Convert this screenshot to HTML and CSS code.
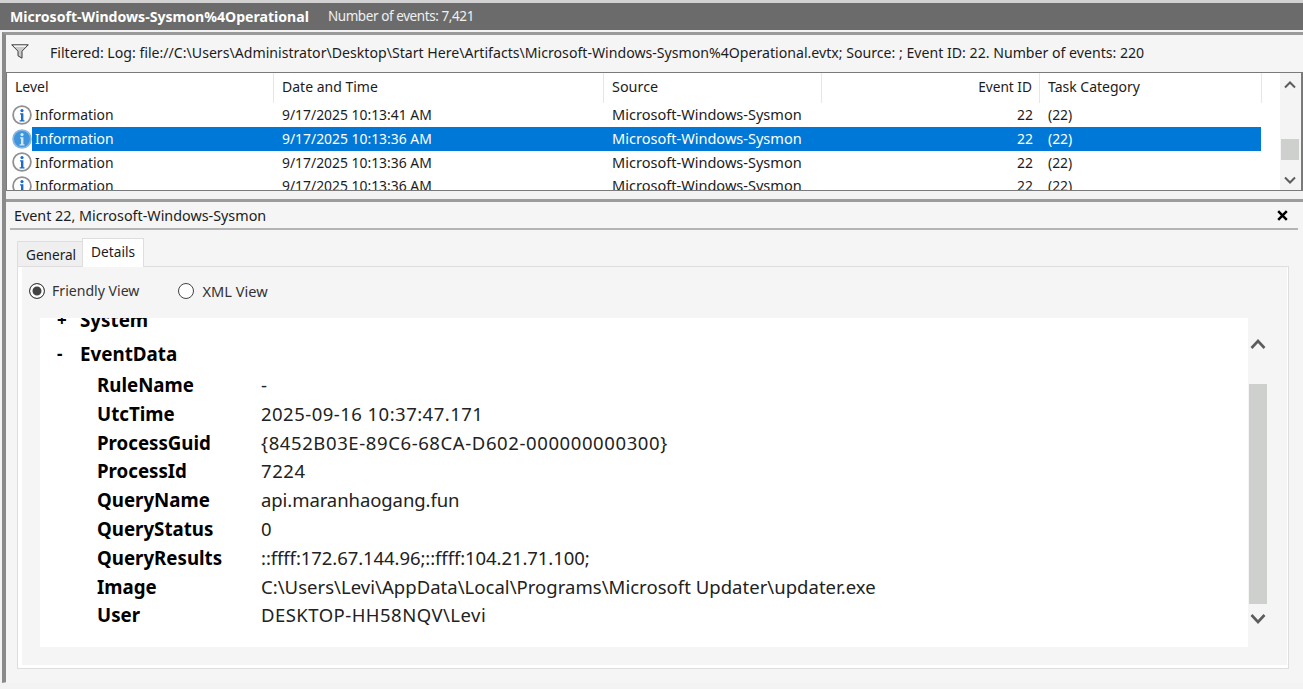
FILE: index.html
```html
<!DOCTYPE html>
<html lang="en">
<head>
<meta charset="utf-8">
<title>Event Viewer</title>
<link rel="stylesheet" href="styles.css">
</head>
<body>
<svg class="defs" width="0" height="0" aria-hidden="true">
  <symbol id="info" viewBox="0 0 20 20">
    <circle cx="10" cy="10" r="8.9" fill="#fff" stroke="#919191" stroke-width="1.8"/>
    <circle cx="10" cy="5.6" r="1.6" fill="#1b6cc8"/>
    <path d="M8 8.3h3.4v6.9h1.1v1.3H7.6v-1.3h1.4V9.6H8z" fill="#1b6cc8"/>
  </symbol>
  <symbol id="info-selected" viewBox="0 0 20 20">
    <circle cx="10" cy="10" r="8.9" fill="#3f94de" stroke="#86b6e0" stroke-width="1.8"/>
    <circle cx="10" cy="5.6" r="1.6" fill="#d5e8f8"/>
    <path d="M8 8.3h3.4v6.9h1.1v1.3H7.6v-1.3h1.4V9.6H8z" fill="#d5e8f8"/>
  </symbol>
</svg>
<div class="app">
  <header class="titlebar">
    <span class="log-name">Microsoft-Windows-Sysmon%4Operational</span>
    <span class="log-count">Number of events: 7,421</span>
  </header>
  <main class="body">
    <div class="filter">
      <svg class="funnel" width="18" height="15" viewBox="0 0 18 15">
        <path d="M.7.8h16.6l-6.3 6.4v7l-4-2.4V7.2z" fill="#c9c9c9" stroke="#3c3c3c" stroke-width="1"/>
        <path d="M3 2.2h12" stroke="#fff" stroke-width="1.2"/>
      </svg>
      <span>Filtered: Log: file://C:\Users\Administrator\Desktop\Start Here\Artifacts\Microsoft-Windows-Sysmon%4Operational.evtx; Source: ; Event ID: 22. Number of events: 220</span>
    </div>
    <section class="list">
      <div class="list-main">
        <div class="row head">
          <div class="c level">Level</div>
          <div class="c date">Date and Time</div>
          <div class="c source">Source</div>
          <div class="c id">Event ID</div>
          <div class="c task">Task Category</div>
        </div>
        <div class="row">
          <div class="c level"><svg class="info"><use href="#info"/></svg><span>Information</span></div>
          <div class="c date">9/17/2025 10:13:41 AM</div>
          <div class="c source">Microsoft-Windows-Sysmon</div>
          <div class="c id">22</div>
          <div class="c task">(22)</div>
        </div>
        <div class="row selected">
          <div class="c level"><svg class="info"><use href="#info-selected"/></svg><span>Information</span></div>
          <div class="c date">9/17/2025 10:13:36 AM</div>
          <div class="c source">Microsoft-Windows-Sysmon</div>
          <div class="c id">22</div>
          <div class="c task">(22)</div>
        </div>
        <div class="row">
          <div class="c level"><svg class="info"><use href="#info"/></svg><span>Information</span></div>
          <div class="c date">9/17/2025 10:13:36 AM</div>
          <div class="c source">Microsoft-Windows-Sysmon</div>
          <div class="c id">22</div>
          <div class="c task">(22)</div>
        </div>
        <div class="row">
          <div class="c level"><svg class="info"><use href="#info"/></svg><span>Information</span></div>
          <div class="c date">9/17/2025 10:13:36 AM</div>
          <div class="c source">Microsoft-Windows-Sysmon</div>
          <div class="c id">22</div>
          <div class="c task">(22)</div>
        </div>
      </div>
      <div class="list-scroll">
        <svg class="arrow" width="12" height="8" viewBox="0 0 12 8"><path d="M1 6.5l5-5 5 5" fill="none" stroke="#5c5c5c" stroke-width="2"/></svg>
        <div class="thumb"></div>
        <svg class="arrow" width="12" height="8" viewBox="0 0 12 8"><path d="M1 1.5l5 5 5-5" fill="none" stroke="#5c5c5c" stroke-width="2"/></svg>
      </div>
    </section>
    <section class="event">
      <div class="event-head">
        <span>Event 22, Microsoft-Windows-Sysmon</span>
        <svg width="11" height="11" viewBox="0 0 11 11"><path d="M1.2 1.2l8.6 8.6M9.8 1.2l-8.6 8.6" stroke="#000" stroke-width="2.5"/></svg>
      </div>
      <div class="tabs">
        <div class="tab">General</div>
        <div class="tab active">Details</div>
      </div>
      <div class="tab-panel">
        <div class="radios">
          <label class="radio"><span class="dot on"></span><span>Friendly View</span></label>
          <label class="radio xml"><span class="dot"></span><span>XML View</span></label>
        </div>
        <div class="viewer">
          <div class="doc">
            <div class="doc-inner">
              <div class="group"><span class="sign">+</span>System</div>
              <div class="group second"><span class="sign">-</span>EventData</div>
              <dl class="fields">
                <dt>RuleName</dt><dd>-</dd>
                <dt>UtcTime</dt><dd class="wide">2025-09-16 10:37:47.171</dd>
                <dt>ProcessGuid</dt><dd class="wider">{8452B03E-89C6-68CA-D602-000000000300}</dd>
                <dt>ProcessId</dt><dd class="wider">7224</dd>
                <dt>QueryName</dt><dd class="tight">api.maranhaogang.fun</dd>
                <dt>QueryStatus</dt><dd>0</dd>
                <dt>QueryResults</dt><dd class="tight">::ffff:172.67.144.96;::ffff:104.21.71.100;</dd>
                <dt>Image</dt><dd class="open">C:\Users\Levi\AppData\Local\Programs\Microsoft Updater\updater.exe</dd>
                <dt>User</dt><dd class="wide">DESKTOP-HH58NQV\Levi</dd>
              </dl>
            </div>
          </div>
          <div class="doc-scroll">
            <svg class="arrow" width="16" height="12" viewBox="0 0 16 12"><path d="M1.5 10l6.5-7 6.5 7" fill="none" stroke="#5c5c5c" stroke-width="2.6"/></svg>
            <div class="doc-thumb"></div>
            <svg class="arrow" width="16" height="12" viewBox="0 0 16 12"><path d="M1.5 2l6.5 7 6.5-7" fill="none" stroke="#5c5c5c" stroke-width="2.6"/></svg>
          </div>
        </div>
      </div>
    </section>
  </main>
</div>
</body>
</html>
```

FILE: styles.css
```css
* { box-sizing: border-box; }
html, body { margin: 0; height: 100%; overflow: hidden; }
.defs { position: absolute; }
body {
  background: #f3f3f3;
  color: #1c1c1c;
  font-family: "Noto Sans", "Liberation Sans", sans-serif;
  font-size: 14px;
}
.app { width: 1303px; height: 689px; background: #f3f3f3; border-top: 3px solid #d2d2d2; }
.titlebar {
  height: 27px;
  background: #6b6b6b;
  color: #fff;
  display: flex;
  align-items: center;
  padding-left: 10px;
  gap: 19px;
  line-height: 27px;
}
.log-name { font-weight: 700; font-size: 14.1px; }
.log-count { color: #f0f0f0; font-size: 13.5px; letter-spacing: -.42px; }
.body {
  height: 651px;
  margin: 2px 0 0 2px;
  border-left: 4px solid #8a8a8a;
  border-top: 3px solid #9a9a9a;
  border-bottom: 1px solid #dcdcdc;
}
.filter {
  height: 37px;
  padding: 0 0 1px 5px;
  display: flex;
  align-items: center;
  gap: 21px;
  background: #f5f5f5;
  line-height: 20px;
}
.filter span { font-size: 14.14px; white-space: nowrap; }
.funnel { flex: none; margin-top: -4px; }
.list {
  height: 119px;
  display: flex;
  background: #fff;
  border: 1px solid #7a7a7a;
  border-right-width: 2px;
  overflow: hidden;
}
.list-main { flex: 1; min-width: 0; overflow: hidden; }
.row {
  display: flex;
  height: 23.8px;
  line-height: 24px;
  font-size: 13.9px;
  white-space: nowrap;
  width: 1254px;
}
.row.head { height: 30px; line-height: 28px; width: 1274px; font-size: 14px; }
.c { flex: none; padding-left: 8px; overflow: hidden; }
.head .c { border-right: 1px solid #e6e6e6; }
.level { width: 267px; display: flex; align-items: center; }
.head .level { display: block; }
.date { width: 330px; }
.source { width: 218px; font-size: 14.55px; line-height: 23px; }
.head .source { font-size: 14.4px; line-height: 27px; }
.id { width: 218px; text-align: right; padding-right: 7px; padding-left: 0; }
.head .id { font-size: 13.7px; }
.task { flex: 1; }
.head .task { flex: none; width: 222px; }
.info { width: 20px; height: 20px; margin: 0 3px 0 -3px; flex: none; }
.selected {
  background: linear-gradient(to right, transparent 25px, #0078d7 25px);
  color: #fff;
}
.list-scroll {
  width: 21px;
  padding-right: 2px;
  flex: none;
  background: #f4f4f4;
  display: flex;
  flex-direction: column;
  align-items: center;
  padding-top: 8px;
}
.thumb { width: 18px; height: 21px; background: #cdd0cd; margin: 50px 0 16px; flex: none; }
.event { margin-top: 8px; border-top: 3px solid #9c9c9c; height: 484px; background: #f5f5f5; }
.event-head {
  height: 28px;
  margin: 0 5px 0 4px;
  border-bottom: 2px solid #b4b4b4;
  padding: 0 10px 0 4px;
  display: flex;
  align-items: center;
  justify-content: space-between;
  font-size: 14.35px;
}
.tabs { display: flex; margin: 7px 0 0 11px; align-items: flex-end; height: 29px; }
.tab {
  height: 25px;
  padding: 0 6px 0 8px;
  line-height: 26px;
  background: #efefef;
  border: 1px solid #dedede;
  border-bottom: 0;
  font-size: 13.6px;
}
.tab.active {
  height: 29px;
  padding: 0 8px;
  line-height: 25px;
  background: #fff;
  font-size: 13.7px;
  margin-left: -1px;
  position: relative;
  z-index: 1;
  margin-bottom: -1px;
}
.tab-panel {
  margin: 0 14px 0 11px;
  height: 403px;
  border: 1px solid #dedede;
  box-shadow: inset 4px -3px 0 #fff, inset -1px 0 0 #fff;
  padding: 4px;
}
.radios {
  display: flex;
  gap: 39px;
  padding: 0 0 8px 7px;
  height: 47px;
  align-items: center;
  font-size: 14.1px;
}
.radio { display: flex; align-items: center; gap: 7px; color: #333; }
.xml { gap: 8px; font-size: 14.6px; }
.dot {
  width: 16px;
  height: 16px;
  border-radius: 50%;
  background: #fff;
  border: 1.4px solid #444;
}
.dot.on { background: #444; box-shadow: inset 0 0 0 2.5px #fff; }
.viewer { display: flex; height: 329px; }
.doc { width: 1208px; background: #fff; overflow: hidden; flex: none; margin-left: 18px; }
.doc-inner { margin-top: -10px; padding-left: 17px; color: #000; }
.group { font-weight: 700; font-size: 18.8px; line-height: 24px; height: 24px; display: flex; }
.group.second { margin-top: 10px; }
.sign { width: 23px; font-size: 17px; }
.fields {
  margin: 5px 0 0 40px;
  display: grid;
  grid-template-columns: 164px 1fr;
  grid-auto-rows: 28.8px;
  font-size: 18.5px;
  line-height: 28.8px;
}
dt { font-weight: 700; font-size: 18.7px; }
dd { margin: 0; color: #222; white-space: nowrap; }
.wide { letter-spacing: .47px; }
.wider { letter-spacing: .6px; }
.tight { letter-spacing: -.08px; }
.open { letter-spacing: .03px; }
.doc-scroll {
  flex: none;
  width: 19px;
  display: flex;
  flex-direction: column;
  align-items: center;
  padding-top: 20px;
}
.doc-thumb { width: 18px; height: 220px; background: #cdd0cd; margin: 34px 0 9px; flex: none; }
```
